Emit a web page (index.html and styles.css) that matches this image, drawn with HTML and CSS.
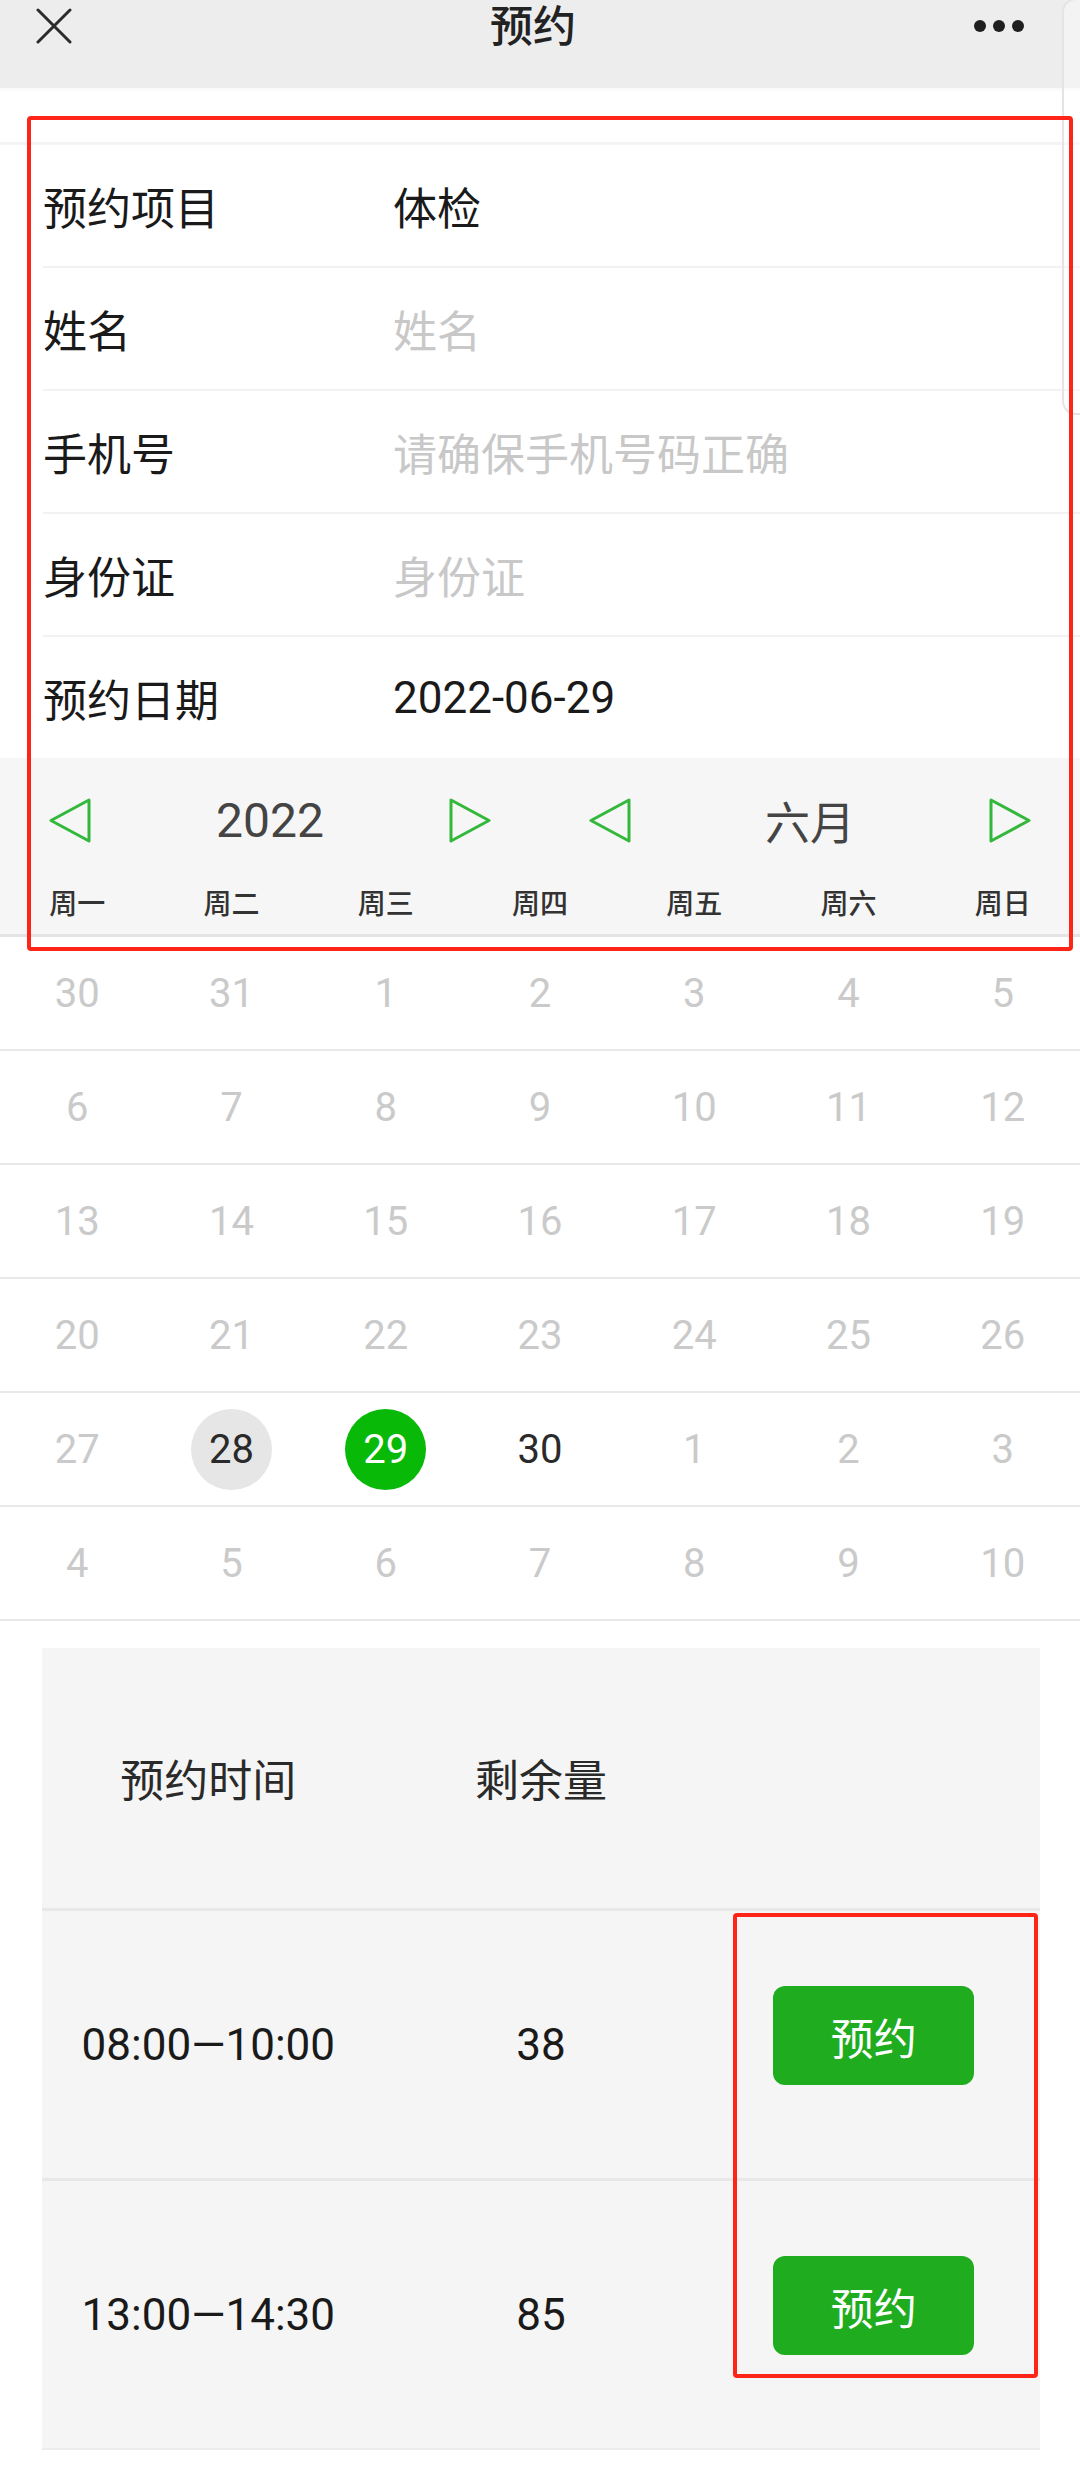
FILE: index.html
```html
<!DOCTYPE html>
<html lang="zh-CN">
  <head>
    <meta charset="UTF-8" />
    <meta name="viewport" content="width=device-width, initial-scale=1.0" />
    <title>预约</title>
    <link rel="stylesheet" href="styles.css">
  </head>
  <body>
    <div class="navbar">
      <svg class="nav-close" width="36" height="36" viewBox="0 0 36 36">
        <path d="M2 2 L34 34 M34 2 L2 34" stroke="#2b2b2b" stroke-width="3" stroke-linecap="round" fill="none" />
      </svg>
      <div class="nav-title">预约</div>
      <svg class="nav-more" width="56" height="14" viewBox="0 0 56 14">
        <circle cx="6" cy="7" r="6" fill="#1f1f1f" />
        <circle cx="25" cy="7" r="6" fill="#1f1f1f" />
        <circle cx="44" cy="7" r="6" fill="#1f1f1f" />
      </svg>
    </div>

    <div class="form">
      <div class="form-row">
        <div class="form-label">预约项目</div>
        <div class="form-value">体检</div>
      </div>
      <div class="form-row">
        <div class="form-label">姓名</div>
        <div class="form-value placeholder">姓名</div>
      </div>
      <div class="form-row">
        <div class="form-label">手机号</div>
        <div class="form-value placeholder">请确保手机号码正确</div>
      </div>
      <div class="form-row">
        <div class="form-label">身份证</div>
        <div class="form-value placeholder">身份证</div>
      </div>
      <div class="form-row last">
        <div class="form-label">预约日期</div>
        <div class="form-value">2022-06-29</div>
      </div>
    </div>

    <div class="calendar">
      <div class="cal-head">
        <div class="cal-switch">
          <svg class="arrow" width="44" height="45" viewBox="0 0 44 45">
            <path d="M41 2 L3 22.5 L41 43 Z" stroke="#34b83c" stroke-width="3" fill="none" stroke-linejoin="round" />
          </svg>
          <span class="cal-year">2022</span>
          <svg class="arrow" width="44" height="45" viewBox="0 0 44 45">
            <path d="M3 2 L41 22.5 L3 43 Z" stroke="#34b83c" stroke-width="3" fill="none" stroke-linejoin="round" />
          </svg>
        </div>
        <div class="cal-switch">
          <svg class="arrow" width="44" height="45" viewBox="0 0 44 45">
            <path d="M41 2 L3 22.5 L41 43 Z" stroke="#34b83c" stroke-width="3" fill="none" stroke-linejoin="round" />
          </svg>
          <span class="cal-month">六月</span>
          <svg class="arrow" width="44" height="45" viewBox="0 0 44 45">
            <path d="M3 2 L41 22.5 L3 43 Z" stroke="#34b83c" stroke-width="3" fill="none" stroke-linejoin="round" />
          </svg>
        </div>
        <div class="weekdays">
          <span>周一</span><span>周二</span><span>周三</span><span>周四</span><span>周五</span><span>周六</span><span>周日</span>
        </div>
      </div>

      <div class="cal-body">
        <div class="week">
          <span class="day">30</span><span class="day">31</span><span class="day">1</span><span class="day">2</span><span class="day">3</span><span class="day">4</span><span class="day">5</span>
        </div>
        <div class="week">
          <span class="day">6</span><span class="day">7</span><span class="day">8</span><span class="day">9</span><span class="day">10</span><span class="day">11</span><span class="day">12</span>
        </div>
        <div class="week">
          <span class="day">13</span><span class="day">14</span><span class="day">15</span><span class="day">16</span><span class="day">17</span><span class="day">18</span><span class="day">19</span>
        </div>
        <div class="week">
          <span class="day">20</span><span class="day">21</span><span class="day">22</span><span class="day">23</span><span class="day">24</span><span class="day">25</span><span class="day">26</span>
        </div>
        <div class="week">
          <span class="day">27</span>
          <span class="day"><b class="day-dot today">28</b></span>
          <span class="day"><b class="day-dot selected">29</b></span>
          <span class="day active">30</span>
          <span class="day">1</span><span class="day">2</span><span class="day">3</span>
        </div>
        <div class="week">
          <span class="day">4</span><span class="day">5</span><span class="day">6</span><span class="day">7</span><span class="day">8</span><span class="day">9</span><span class="day">10</span>
        </div>
      </div>
    </div>

    <div class="slots">
      <div class="slot-row slot-head">
        <div>预约时间</div>
        <div>剩余量</div>
        <div></div>
      </div>
      <div class="slot-row">
        <div>08:00—10:00</div>
        <div>38</div>
        <div><button class="btn-book">预约</button></div>
      </div>
      <div class="slot-row last">
        <div>13:00—14:30</div>
        <div>85</div>
        <div><button class="btn-book">预约</button></div>
      </div>
    </div>

    <!-- overlays: scroll edge + red annotation frames -->
    <div class="scroll-edge"></div>
    <div class="mark mark-form"></div>
    <div class="mark mark-buttons"></div>
  </body>
</html>
```

FILE: styles.css
```css
body {
  font-family: Roboto, "Noto Sans CJK SC", sans-serif;
  margin: 0;
  width: 1080px;
  min-height: 2490px;
  background: #fff;
  color: #1f1f1f;
  position: relative;
  overflow: hidden;
}
.navbar {
  height: 88px;
  background: #ededed;
  display: grid;
  grid-template-columns: 1fr auto 1fr;
  align-items: start;
  padding: 0 50px 0 36px;
  box-shadow: 0 2px 3px rgba(0, 0, 0, 0.03);
}
.nav-close {
  margin-top: 8px;
}
.nav-title {
  font-size: 43px;
  line-height: 54px;
  font-weight: 500;
  color: #222;
}
.nav-more {
  justify-self: end;
  margin-top: 19px;
}
.form {
  margin-top: 54px;
  border-top: 3px solid #f4f4f4;
}
.form-row {
  margin-left: 43px;
  height: 121px;
  display: flex;
  align-items: center;
  border-bottom: 2px solid #f2f2f2;
  font-size: 44px;
}
.form-row.last {
  border-bottom: none;
}
.form-label {
  width: 350px;
  color: #1a1a1a;
}
.form-value {
  color: #1a1a1a;
}
.form-value.placeholder {
  color: #c8c8c8;
}
.cal-head {
  background: #f6f6f6;
  display: flex;
  flex-wrap: wrap;
  padding-top: 40px;
  border-bottom: 3px solid #e4e4e4;
}
.cal-switch {
  width: 540px;
  box-sizing: border-box;
  padding: 0 48px;
  display: flex;
  justify-content: space-between;
  align-items: center;
  height: 45px;
}
.arrow {
  display: block;
}
.cal-year {
  font-size: 48px;
  color: #444;
}
.cal-month {
  font-size: 45px;
  color: #444;
}
.weekdays {
  width: 100%;
  margin-top: 42px;
  height: 40px;
  padding-bottom: 9px;
  display: grid;
  grid-template-columns: repeat(7, 1fr);
  text-align: center;
  font-size: 28px;
  line-height: 40px;
  color: #333;
  font-weight: 500;
}
.week {
  display: grid;
  grid-template-columns: repeat(7, 1fr);
  height: 112px;
  border-bottom: 2px solid #e9e9e9;
}
.day {
  display: flex;
  align-items: center;
  justify-content: center;
  font-size: 40px;
  color: #cacaca;
}
.day.active {
  color: #2a2a2a;
}
.day-dot {
  font-weight: normal;
  width: 81px;
  height: 81px;
  border-radius: 50%;
  display: flex;
  align-items: center;
  justify-content: center;
}
.day-dot.today {
  background: #e6e6e6;
  color: #2a2a2a;
}
.day-dot.selected {
  background: #09b908;
  color: #fff;
}
.slots {
  margin: 27px 40px 0 42px;
  background: #f5f5f5;
  border-bottom: 2px solid #ececec;
}
.slot-row {
  display: grid;
  grid-template-columns: repeat(3, 1fr);
  align-items: center;
  text-align: center;
  height: 267px;
  border-bottom: 3px solid #e8e8e8;
  font-size: 44px;
  color: #1a1a1a;
}
.slot-head {
  height: 260px;
  color: #2a2a2a;
}
.slot-row.last {
  border-bottom: none;
}
.btn-book {
  width: 201px;
  height: 99px;
  margin-bottom: 18px;
  border: none;
  border-radius: 12px;
  background: #1fac1f;
  color: #fff;
  font-family: Roboto, "Noto Sans CJK SC", sans-serif;
  font-size: 43px;
}
.scroll-edge {
  position: absolute;
  top: -2px;
  left: 1062px;
  width: 40px;
  height: 413px;
  border: 2px solid #e4e4e4;
  border-radius: 14px;
  background: rgba(255, 255, 255, 0.35);
}
.mark {
  position: absolute;
  border: 4px solid #ff2418;
  border-radius: 4px;
  box-sizing: border-box;
}
.mark-form {
  left: 27px;
  top: 116px;
  width: 1046px;
  height: 835px;
}
.mark-buttons {
  left: 733px;
  top: 1913px;
  width: 305px;
  height: 465px;
}
```
